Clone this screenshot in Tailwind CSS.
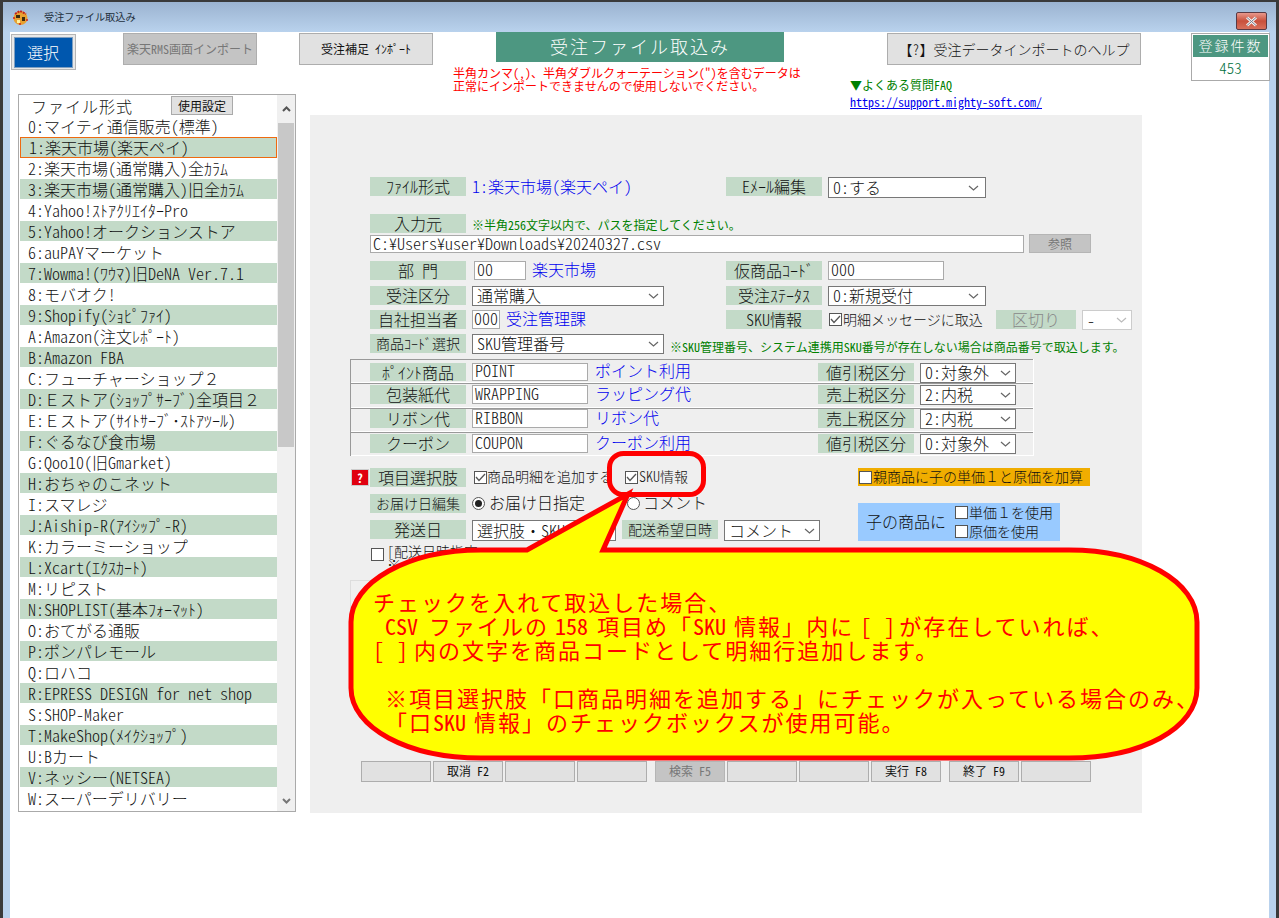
<!DOCTYPE html>
<html lang="ja">
<head>
<meta charset="utf-8">
<title>受注ファイル取込み</title>
<script src="https://cdn.jsdelivr.net/npm/@tailwindcss/browser@4"></script>
</head>
<body class="m-0 bg-white">
<div class="relative w-[1279px] h-[918px] overflow-hidden flex flex-col bg-[#b9d2ed] border-t-2 border-x-[3px] border-[#3a3a3a] font-['Noto_Sans_CJK_JP',sans-serif] font-light [font-feature-settings:'hwid'] text-[#111] text-[16px]">
  <!-- title bar -->
  <div class="h-[30px] shrink-0 flex items-center bg-gradient-to-b from-[#9bb3d0] to-[#b9d2ed] pl-[9px]">
    <svg width="17" height="17" viewBox="0 0 17 17"><circle cx="8.5" cy="9" r="7" fill="#e8a030"/><path d="M3 5 8 2l6 3" fill="none" stroke="#c02020" stroke-width="2" stroke-dasharray="2 1"/><rect x="4" y="6" width="4" height="3" fill="#3a2a10"/><rect x="10" y="8" width="3" height="4" fill="#3a2a10"/><rect x="5" y="11" width="3" height="3" fill="#fff0a0"/><circle cx="2" cy="9" r="1" fill="#d02020"/><circle cx="15" cy="11" r="1" fill="#d02020"/><circle cx="8" cy="15" r="1" fill="#d02020"/></svg>
    <span class="ml-[15px] text-[10.2px] font-normal leading-none text-[#22303c]">受注ファイル取込み</span>
    <div class="ml-auto mr-[9px] mt-[8px] w-[31px] h-[18px] rounded-[2px] border border-[#5a3a44] bg-gradient-to-b from-[#e8988c] via-[#c8503c] to-[#d8705c] flex items-center justify-center">
      <svg width="13" height="11" viewBox="0 0 13 11"><path d="M2 1.5 11 9.5M11 1.5 2 9.5" stroke="#f4f4f4" stroke-width="3"/><path d="M2 1.5 11 9.5M11 1.5 2 9.5" stroke="#7a7a8a" stroke-width="1" /></svg>
    </div>
  </div>
  <!-- client area -->
  <div class="flex-1 mx-[7px] bg-white flex flex-col">
    <!-- top row -->
    <div class="h-[62px] shrink-0 flex items-start">
      <div class="ml-px mt-[2px] w-[65px] h-[36px] shrink-0 bg-[#e8e8e8] border border-[#b5b5b5] flex items-center justify-center">
        <div class="w-[59px] h-[31px] bg-[#0057ae] border border-[#7f9fc0] text-white flex items-center justify-center pb-px pr-px">選択</div>
      </div>
      <div class="ml-[47px] mt-px w-[134px] h-[32px] shrink-0 bg-[#c4c4c4] border border-[#aeaeae] text-[#777] text-[12px] font-normal flex items-center justify-center">楽天RMS画面インポート</div>
      <div class="ml-[42px] mt-px w-[134px] h-[32px] shrink-0 bg-[#e1e1e1] border border-[#adadad] text-[12px] font-normal flex items-center justify-center">受注補足 ｲﾝﾎﾟｰﾄ</div>
      <div class="ml-[20px] w-[350px] shrink-0 flex flex-col">
        <div class="ml-[43px] w-[288px] h-[30px] bg-[#4d9781] text-white text-[18px] tracking-[2px] flex items-center justify-center pb-[2px]">受注ファイル取込み</div>
        <p class="mt-[4px] text-[12px] font-normal leading-[13px] text-[#ff0000] whitespace-nowrap">半角カンマ(,)、半角ダブルクォーテーション(")を含むデータは<br>正常にインポートできませんので使用しないでください。</p>
      </div>
      <div class="ml-[47px] w-[291px] shrink-0 flex flex-col">
        <div class="ml-[37px] mt-px w-[254px] h-[32px] bg-[#e1e1e1] border border-[#adadad] text-[14px] flex items-center justify-center"><span class="[font-feature-settings:normal]">【</span>?<span class="[font-feature-settings:normal]">】</span>受注データインポートのヘルプ</div>
        <p class="mt-[13px] text-[12px] font-normal leading-[13px] text-[#008000]">▼よくある質問FAQ</p>
        <a class="mt-[4px] text-[12px] font-normal leading-[13px] text-[#0000ee] underline whitespace-nowrap">https://support.mighty-soft.com/</a>
      </div>
      <div class="ml-[50px] mt-px w-[79px] h-[48px] shrink-0 bg-white border border-[#aaa] flex flex-col">
        <div class="mx-px mt-px h-[24px] bg-[#4d9781] text-white text-[14px] tracking-[2px] flex items-center justify-center">登録件数</div>
        <div class="flex-1 text-[#00703c] text-[15px] flex items-center justify-center pb-px">453</div>
      </div>
    </div>
    <!-- main row -->
    <div class="flex items-start">
      <!-- file type list -->
      <div class="ml-[8px] w-[278px] h-[718px] shrink-0 border border-[#aaa] flex">
        <div class="w-[258px] pl-px flex flex-col">
          <div class="h-[21px] flex items-center">
            <span class="ml-[11px] tracking-[1px] leading-none w-[140px]">ファイル形式</span>
            <span class="w-[62px] h-[19px] bg-[#e1e1e1] border border-[#aaa] text-[12px] font-normal flex items-center justify-center">使用設定</span>
          </div>
          <div class="h-[21px] pl-[8px] leading-[20px] whitespace-nowrap">0:マイティ通信販売(標準)</div>
          <div class="h-[21px] pl-[8px] leading-[18px] whitespace-nowrap bg-[#c3dac8] border-[1.5px] border-[#ee6a10]">1:楽天市場(楽天ペイ)</div>
          <div class="h-[21px] pl-[8px] leading-[20px] whitespace-nowrap">2:楽天市場(通常購入)全ｶﾗﾑ</div>
          <div class="h-[21px] pl-[8px] leading-[20px] whitespace-nowrap bg-[#c3dac8] border-b border-white">3:楽天市場(通常購入)旧全ｶﾗﾑ</div>
          <div class="h-[21px] pl-[8px] leading-[20px] whitespace-nowrap">4:Yahoo!ｽﾄｱｸﾘｴｲﾀｰPro</div>
          <div class="h-[21px] pl-[8px] leading-[20px] whitespace-nowrap bg-[#c3dac8] border-b border-white">5:Yahoo!オークションストア</div>
          <div class="h-[21px] pl-[8px] leading-[20px] whitespace-nowrap">6:auPAYマーケット</div>
          <div class="h-[21px] pl-[8px] leading-[20px] whitespace-pre bg-[#c3dac8] border-b border-white">7:Wowma!(ﾜｳﾏ)旧DeNA Ver.7.1</div>
          <div class="h-[21px] pl-[8px] leading-[20px] whitespace-nowrap">8:モバオク!</div>
          <div class="h-[21px] pl-[8px] leading-[20px] whitespace-nowrap bg-[#c3dac8] border-b border-white">9:Shopify(ｼｮﾋﾟﾌｧｲ)</div>
          <div class="h-[21px] pl-[8px] leading-[20px] whitespace-nowrap">A:Amazon(注文ﾚﾎﾟｰﾄ)</div>
          <div class="h-[21px] pl-[8px] leading-[20px] whitespace-pre bg-[#c3dac8] border-b border-white">B:Amazon FBA</div>
          <div class="h-[21px] pl-[8px] leading-[20px] whitespace-nowrap">C:フューチャーショップ<span class="[font-feature-settings:normal]">２</span></div>
          <div class="h-[21px] pl-[8px] leading-[20px] whitespace-nowrap bg-[#c3dac8] border-b border-white">D:<span class="[font-feature-settings:normal]">Ｅ</span>ストア(ｼｮｯﾌﾟｻｰﾌﾞ)全項目<span class="[font-feature-settings:normal]">２</span></div>
          <div class="h-[21px] pl-[8px] leading-[20px] whitespace-nowrap">E:<span class="[font-feature-settings:normal]">Ｅ</span>ストア(ｻｲﾄｻｰﾌﾞ･ｽﾄｱﾂｰﾙ)</div>
          <div class="h-[21px] pl-[8px] leading-[20px] whitespace-nowrap bg-[#c3dac8] border-b border-white">F:ぐるなび食市場</div>
          <div class="h-[21px] pl-[8px] leading-[20px] whitespace-nowrap">G:Qoo10(旧Gmarket)</div>
          <div class="h-[21px] pl-[8px] leading-[20px] whitespace-nowrap bg-[#c3dac8] border-b border-white">H:おちゃのこネット</div>
          <div class="h-[21px] pl-[8px] leading-[20px] whitespace-nowrap">I:スマレジ</div>
          <div class="h-[21px] pl-[8px] leading-[20px] whitespace-nowrap bg-[#c3dac8] border-b border-white">J:Aiship-R(ｱｲｼｯﾌﾟ-R)</div>
          <div class="h-[21px] pl-[8px] leading-[20px] whitespace-nowrap">K:カラーミーショップ</div>
          <div class="h-[21px] pl-[8px] leading-[20px] whitespace-nowrap bg-[#c3dac8] border-b border-white">L:Xcart(ｴｸｽｶｰﾄ)</div>
          <div class="h-[21px] pl-[8px] leading-[20px] whitespace-nowrap">M:リピスト</div>
          <div class="h-[21px] pl-[8px] leading-[20px] whitespace-nowrap bg-[#c3dac8] border-b border-white">N:SHOPLIST(基本ﾌｫｰﾏｯﾄ)</div>
          <div class="h-[21px] pl-[8px] leading-[20px] whitespace-nowrap">O:おてがる通販</div>
          <div class="h-[21px] pl-[8px] leading-[20px] whitespace-nowrap bg-[#c3dac8] border-b border-white">P:ポンパレモール</div>
          <div class="h-[21px] pl-[8px] leading-[20px] whitespace-nowrap">Q:ロハコ</div>
          <div class="h-[21px] pl-[8px] leading-[20px] whitespace-pre bg-[#c3dac8] border-b border-white">R:EPRESS DESIGN for net shop</div>
          <div class="h-[21px] pl-[8px] leading-[20px] whitespace-nowrap">S:SHOP-Maker</div>
          <div class="h-[21px] pl-[8px] leading-[20px] whitespace-nowrap bg-[#c3dac8] border-b border-white">T:MakeShop(ﾒｲｸｼｮｯﾌﾟ)</div>
          <div class="h-[21px] pl-[8px] leading-[20px] whitespace-nowrap">U:Bカート</div>
          <div class="h-[21px] pl-[8px] leading-[20px] whitespace-nowrap bg-[#c3dac8] border-b border-white">V:ネッシー(NETSEA)</div>
          <div class="h-[21px] pl-[8px] leading-[20px] whitespace-nowrap">W:スーパーデリバリー</div>
        </div>
        <div class="w-[18px] bg-[#f0f0f0] flex flex-col items-center">
          <div class="h-[28px] flex items-center">
            <svg width="9" height="6" viewBox="0 0 9 6"><path d="M1 5 4.5 1.5 8 5" fill="none" stroke="#555" stroke-width="2"/></svg>
          </div>
          <div class="w-[16px] h-[324px] bg-[#c8c8c8]"></div>
          <div class="mt-auto h-[21px] flex items-center">
            <svg width="9" height="6" viewBox="0 0 9 6"><path d="M1 1 4.5 4.5 8 1" fill="none" stroke="#777" stroke-width="2"/></svg>
          </div>
        </div>
      </div>
      <!-- main panel -->
      <div class="ml-[14px] mt-[21px] w-[832px] h-[698px] shrink-0 bg-[#efefef] flex flex-col">
        <div class="mt-[62px] ml-[60px] h-[37px] flex items-start">
          <div class="w-[96px] h-[19px] bg-[#c3dac8] flex items-center justify-center pb-px">ﾌｧｲﾙ形式</div>
          <div class="ml-[6px] w-[254px] h-[19px] leading-[18px] text-[#0000ee]">1:楽天市場(楽天ペイ)</div>
          <div class="w-[96px] h-[19px] bg-[#c3dac8] flex items-center justify-center pb-px">Eﾒｰﾙ編集</div>
          <div class="ml-[6px] w-[158px] h-[21px] bg-white border border-[#777] flex items-center justify-between pl-[4px] pr-[6px] leading-[16px] pb-[2px]">0:する<svg class="mt-[2px]" width="11" height="6" viewBox="0 0 11 6"><path d="M1 1 5.5 5 10 1" fill="none" stroke="#666" stroke-width="1.2"/></svg></div>
        </div>
        <div class="ml-[60px] h-[20px] flex items-start">
          <div class="w-[96px] h-[19px] bg-[#c3dac8] flex items-center justify-center pb-px">入力元</div>
          <span class="ml-[6px] mt-[4px] text-[12px] font-normal leading-[14px] text-[#008000] whitespace-nowrap">※半角256文字以内で、パスを指定してください。</span>
        </div>
        <div class="ml-[60px] h-[27px] flex items-start">
          <div class="mt-px w-[654px] h-[18px] bg-white border border-[#aaa] pl-[2px] leading-[15px]">C:¥Users¥user¥Downloads¥20240327.csv</div>
          <div class="ml-[5px] w-[62px] h-[19px] bg-[#c4c4c4] border border-[#b5b5b5] text-[#777] text-[12px] font-normal flex items-center justify-center">参照</div>
        </div>
        <div class="ml-[60px] h-[25px] flex items-start">
          <div class="w-[96px] h-[19px] bg-[#c3dac8] flex items-center justify-center whitespace-pre pb-px">部　門</div>
          <div class="ml-[8px] w-[52px] h-[19px] bg-white border border-[#aaa] pl-[2px] leading-[15px]">00</div>
          <div class="ml-[6px] w-[194px] h-[19px] leading-[17px] text-[#0000ee]">楽天市場</div>
          <div class="w-[96px] h-[19px] bg-[#c3dac8] flex items-center justify-center pb-px">仮商品ｺｰﾄﾞ</div>
          <div class="ml-[6px] w-[116px] h-[19px] bg-white border border-[#aaa] pl-[2px] leading-[15px]">000</div>
        </div>
        <div class="ml-[60px] h-[24px] flex items-start">
          <div class="w-[96px] h-[19px] bg-[#c3dac8] flex items-center justify-center pb-px">受注区分</div>
          <div class="ml-[6px] w-[192px] h-[20px] bg-white border border-[#777] flex items-center justify-between pl-[4px] pr-[4px] leading-[16px] pb-[2px]">通常購入<svg class="mt-[2px]" width="11" height="6" viewBox="0 0 11 6"><path d="M1 1 5.5 5 10 1" fill="none" stroke="#666" stroke-width="1.2"/></svg></div>
          <div class="ml-[62px] w-[96px] h-[19px] bg-[#c3dac8] flex items-center justify-center pb-px">受注ｽﾃｰﾀｽ</div>
          <div class="ml-[6px] w-[158px] h-[20px] bg-white border border-[#777] flex items-center justify-between pl-[4px] pr-[6px] leading-[16px] pb-[2px]">0:新規受付<svg class="mt-[2px]" width="11" height="6" viewBox="0 0 11 6"><path d="M1 1 5.5 5 10 1" fill="none" stroke="#666" stroke-width="1.2"/></svg></div>
        </div>
        <div class="ml-[60px] h-[24px] flex items-start">
          <div class="w-[96px] h-[19px] bg-[#c3dac8] flex items-center justify-center pb-px">自社担当者</div>
          <div class="ml-[6px] w-[28px] h-[19px] bg-white border border-[#aaa] pl-px leading-[15px]">000</div>
          <div class="ml-[6px] w-[220px] h-[19px] leading-[17px] text-[#0000ee]">受注管理課</div>
          <div class="w-[96px] h-[19px] bg-[#c3dac8] flex items-center justify-center pb-px">SKU情報</div>
          <div class="ml-[7px] mt-[3px] w-[13px] h-[13px] bg-white border border-[#555] flex items-center justify-center shrink-0"><svg width="11" height="9" viewBox="0 0 11 9"><path d="M1 4 4 7.5 10 1" fill="none" stroke="#555" stroke-width="1.3"/></svg></div>
          <span class="ml-px w-[153px] h-[19px] leading-[18px] text-[14px] whitespace-nowrap">明細メッセージに取込</span>
          <div class="w-[80px] h-[19px] bg-[#c3dac8] text-[#888] flex items-center justify-center pb-px">区切り</div>
          <div class="ml-[6px] w-[50px] h-[20px] bg-white border border-[#ccc] flex items-center justify-between pl-[4px] pr-[4px]">-<svg width="11" height="6" viewBox="0 0 11 6"><path d="M1 1 5.5 5 10 1" fill="none" stroke="#bbb" stroke-width="1.2"/></svg></div>
        </div>
        <div class="ml-[60px] h-[25px] flex items-start">
          <div class="w-[96px] h-[19px] bg-[#c3dac8] text-[14px] flex items-center justify-center pb-px">商品ｺｰﾄﾞ選択</div>
          <div class="ml-[6px] w-[192px] h-[20px] bg-white border border-[#777] flex items-center justify-between pl-[4px] pr-[4px] leading-[16px] pb-[2px]">SKU管理番号<svg class="mt-[2px]" width="11" height="6" viewBox="0 0 11 6"><path d="M1 1 5.5 5 10 1" fill="none" stroke="#666" stroke-width="1.2"/></svg></div>
          <span class="ml-[6px] mt-[6px] text-[12px] font-normal leading-[14px] text-[#008000] whitespace-nowrap">※SKU管理番号、システム連携用SKU番号が存在しない場合は商品番号で取込します。</span>
        </div>
        <!-- fee table -->
        <div class="ml-[40px] w-[684px] h-[97px] border-l border-[#999] border-r border-r-white flex flex-col">
          <div class="h-[24px] border-t border-t-[#999] border-b border-b-white pl-[19px] pt-[3px] flex items-start">
            <div class="w-[96px] h-[18px] bg-[#c3dac8] flex items-center justify-center pb-px">ﾎﾟｲﾝﾄ商品</div>
            <div class="ml-[6px] w-[116px] h-[18px] bg-white border border-[#aaa] pl-[2px] leading-[13px]">POINT</div>
            <div class="ml-[7px] w-[223px] leading-[15px] text-[#0000ee]">ポイント利用</div>
            <div class="w-[96px] h-[18px] bg-[#c3dac8] flex items-center justify-center pb-px">値引税区分</div>
            <div class="ml-[6px] w-[96px] h-[20px] bg-white border border-[#777] flex items-center justify-between pl-[4px] pr-[4px] leading-[16px] pb-[2px]">0:対象外<svg class="mt-[2px]" width="11" height="6" viewBox="0 0 11 6"><path d="M1 1 5.5 5 10 1" fill="none" stroke="#666" stroke-width="1.2"/></svg></div>
          </div>
          <div class="h-[25px] border-t border-t-[#999] border-b border-b-white pl-[19px] pt-px flex items-start">
            <div class="w-[96px] h-[19px] bg-[#c3dac8] flex items-center justify-center pb-px">包装紙代</div>
            <div class="ml-[6px] w-[116px] h-[19px] bg-white border border-[#aaa] pl-[2px] leading-[15px]">WRAPPING</div>
            <div class="ml-[7px] w-[223px] leading-[17px] text-[#0000ee]">ラッピング代</div>
            <div class="w-[96px] h-[19px] bg-[#c3dac8] flex items-center justify-center pb-px">売上税区分</div>
            <div class="ml-[6px] w-[96px] h-[20px] bg-white border border-[#777] flex items-center justify-between pl-[4px] pr-[4px] leading-[16px] pb-[2px]">2:内税<svg class="mt-[2px]" width="11" height="6" viewBox="0 0 11 6"><path d="M1 1 5.5 5 10 1" fill="none" stroke="#666" stroke-width="1.2"/></svg></div>
          </div>
          <div class="h-[24px] border-t border-t-[#999] border-b border-b-white pl-[19px] flex items-start">
            <div class="w-[96px] h-[19px] bg-[#c3dac8] flex items-center justify-center pb-px">リボン代</div>
            <div class="ml-[6px] w-[116px] h-[19px] bg-white border border-[#aaa] pl-[2px] leading-[15px]">RIBBON</div>
            <div class="ml-[7px] w-[223px] leading-[17px] text-[#0000ee]">リボン代</div>
            <div class="w-[96px] h-[19px] bg-[#c3dac8] flex items-center justify-center pb-px">売上税区分</div>
            <div class="ml-[6px] w-[96px] h-[20px] bg-white border border-[#777] flex items-center justify-between pl-[4px] pr-[4px] leading-[16px] pb-[2px]">2:内税<svg class="mt-[2px]" width="11" height="6" viewBox="0 0 11 6"><path d="M1 1 5.5 5 10 1" fill="none" stroke="#666" stroke-width="1.2"/></svg></div>
          </div>
          <div class="h-[24px] border-t border-t-[#999] border-b border-b-white pl-[19px] pt-px flex items-start">
            <div class="w-[96px] h-[19px] bg-[#c3dac8] flex items-center justify-center pb-px">クーポン</div>
            <div class="ml-[6px] w-[116px] h-[19px] bg-white border border-[#aaa] pl-[2px] leading-[15px]">COUPON</div>
            <div class="ml-[7px] w-[223px] leading-[17px] text-[#0000ee]">クーポン利用</div>
            <div class="w-[96px] h-[19px] bg-[#c3dac8] flex items-center justify-center pb-px">値引税区分</div>
            <div class="ml-[6px] w-[96px] h-[20px] bg-white border border-[#777] flex items-center justify-between pl-[4px] pr-[4px] leading-[16px] pb-[2px]">0:対象外<svg class="mt-[2px]" width="11" height="6" viewBox="0 0 11 6"><path d="M1 1 5.5 5 10 1" fill="none" stroke="#666" stroke-width="1.2"/></svg></div>
          </div>
        </div>
        <!-- options -->
        <div class="ml-[41px] mt-[12px] h-[112px] flex items-start">
          <div class="w-[507px] shrink-0 flex flex-col">
            <div class="h-[26px] flex items-start">
              <div class="mt-px w-[18px] h-[17px] bg-[#e00010] border border-[#ccc] text-white text-[12px] font-bold flex items-center justify-center">?</div>
              <div class="ml-px w-[96px] h-[19px] bg-[#c3dac8] flex items-center justify-center pb-px">項目選択肢</div>
              <div class="ml-[8px] mt-[3px] w-[13px] h-[13px] bg-white border border-[#555] flex items-center justify-center shrink-0"><svg width="11" height="9" viewBox="0 0 11 9"><path d="M1 4 4 7.5 10 1" fill="none" stroke="#555" stroke-width="1.3"/></svg></div>
              <span class="w-[138px] h-[19px] leading-[17px] text-[14px] whitespace-nowrap">商品明細を追加する</span>
              <div class="mt-[3px] w-[13px] h-[13px] bg-white border border-[#555] flex items-center justify-center shrink-0"><svg width="11" height="9" viewBox="0 0 11 9"><path d="M1 4 4 7.5 10 1" fill="none" stroke="#555" stroke-width="1.3"/></svg></div>
              <span class="ml-px h-[19px] leading-[17px] text-[14px] whitespace-nowrap">SKU情報</span>
            </div>
            <div class="h-[26px] flex items-start">
              <div class="ml-[19px] w-[96px] h-[19px] bg-[#c3dac8] text-[14px] flex items-center justify-center pb-px">お届け日編集</div>
              <div class="ml-[6px] mt-[3px] w-[13px] h-[13px] rounded-full bg-white border border-[#555] flex items-center justify-center shrink-0"><div class="w-[7px] h-[7px] rounded-full bg-[#222]"></div></div>
              <span class="ml-[4px] w-[138px] h-[19px] leading-[17px] whitespace-nowrap">お届け日指定</span>
              <div class="mt-[3px] w-[13px] h-[13px] rounded-full bg-white border border-[#555] shrink-0"></div>
              <span class="ml-[3px] h-[19px] leading-[17px] whitespace-nowrap">コメント</span>
            </div>
            <div class="h-[28px] flex items-start">
              <div class="ml-[19px] w-[96px] h-[19px] bg-[#c3dac8] flex items-center justify-center pb-px">発送日</div>
              <div class="ml-[6px] w-[144px] h-[21px] bg-white border border-[#777] flex items-center pl-[4px] whitespace-nowrap leading-[16px] pb-[2px]">選択肢・SKU</div>
              <div class="ml-[6px] w-[96px] h-[19px] bg-[#c3dac8] text-[14px] flex items-center justify-center pb-px">配送希望日時</div>
              <div class="ml-[6px] w-[96px] h-[21px] bg-white border border-[#777] flex items-center justify-between pl-[4px] pr-[4px] leading-[16px] pb-[2px]">コメント<svg class="mt-[2px]" width="11" height="6" viewBox="0 0 11 6"><path d="M1 1 5.5 5 10 1" fill="none" stroke="#666" stroke-width="1.2"/></svg></div>
            </div>
            <div class="h-[28px] flex items-start">
              <div class="ml-[20px] w-[13px] h-[13px] bg-white border border-[#555] shrink-0"></div>
              <span class="ml-[3px] -mt-[3px] text-[14px] leading-[13px] whitespace-nowrap">[配送日時指定<br>※</span>
            </div>
          </div>
          <div class="flex flex-col">
            <div class="w-[232px] h-[18px] bg-[#f0ad00] flex items-center text-[14px] whitespace-nowrap pb-px">
              <div class="w-[13px] h-[13px] ml-px mt-px bg-white border border-[#555] shrink-0"></div><span class="ml-px">親商品に子の単価<span class="[font-feature-settings:normal]">１</span>と原価を加算</span>
            </div>
            <div class="mt-[17px] w-[202px] h-[38px] bg-[#99caff] flex items-center pb-px">
              <span class="ml-[8px] w-[89px] leading-none pb-px">子の商品に</span>
              <div class="flex flex-col gap-[5px] text-[14px] leading-none whitespace-nowrap">
                <div class="flex items-center"><div class="w-[13px] h-[13px] bg-white border border-[#555]"></div><span class="ml-px">単価<span class="[font-feature-settings:normal]">１</span>を使用</span></div>
                <div class="flex items-center"><div class="w-[13px] h-[13px] bg-white border border-[#555]"></div><span class="ml-px">原価を使用</span></div>
              </div>
            </div>
          </div>
        </div>
        <!-- box hidden beneath the callout -->
        <div class="ml-[40px] w-[750px] h-[90px] border border-[#ddd]"></div>
        <!-- function keys -->
        <div class="ml-[51px] mt-[91px] flex text-[12px] font-normal leading-none">
          <div class="w-[70px] h-[21px] bg-[#e1e1e1] border border-[#adadad]"></div>
          <div class="ml-[2px] w-[70px] h-[21px] bg-[#e1e1e1] border border-[#adadad] flex items-center justify-center pb-px">取消 F2</div>
          <div class="ml-[2px] w-[70px] h-[21px] bg-[#e1e1e1] border border-[#adadad]"></div>
          <div class="ml-[2px] w-[70px] h-[21px] bg-[#e1e1e1] border border-[#adadad]"></div>
          <div class="ml-[8px] w-[70px] h-[21px] bg-[#c4c4c4] border border-[#b5b5b5] text-[#777] flex items-center justify-center pb-px">検索 F5</div>
          <div class="ml-[2px] w-[70px] h-[21px] bg-[#e1e1e1] border border-[#adadad]"></div>
          <div class="ml-[2px] w-[70px] h-[21px] bg-[#e1e1e1] border border-[#adadad]"></div>
          <div class="ml-[2px] w-[70px] h-[21px] bg-[#e1e1e1] border border-[#adadad] flex items-center justify-center pb-px">実行 F8</div>
          <div class="ml-[8px] w-[70px] h-[21px] bg-[#e1e1e1] border border-[#adadad] flex items-center justify-center pb-px">終了 F9</div>
          <div class="ml-[2px] w-[70px] h-[21px] bg-[#e1e1e1] border border-[#adadad]"></div>
        </div>
      </div>
    </div>
  </div>
  <!-- annotation callout, over the form -->
  <svg class="absolute left-[-3px] top-[-2px] pointer-events-none" width="1279" height="918" viewBox="0 0 1279 918">
    <rect x="609.5" y="453.5" width="94" height="41" rx="14" ry="14" fill="none" stroke="#ff0000" stroke-width="5"/>
    <path d="M481 550 H527 L628 494 L603 550 H1069 C1142 550 1197 582 1197 622 V688 C1197 728 1142 758 1069 758 H481 C408 758 351 728 351 688 V622 C351 582 408 550 481 550 Z" fill="#ffff00" stroke="#ff0000" stroke-width="5" stroke-linejoin="miter"/>
  </svg>
  <div class="absolute left-[370px] top-[587px] text-[22px] font-normal leading-[24px] tracking-[2px] text-[#ff0000] whitespace-nowrap">
    <div>チェックを入れて取込した場合、</div>
    <div class="pl-[12px]"><span class="tracking-normal">CSV&nbsp;</span>ファイルの<span class="ml-[6px] mr-[9px] tracking-normal">158</span>項目め<span class="[font-feature-settings:normal]">「</span><span class="tracking-normal">SKU</span><span class="ml-[8px]">情報</span><span class="[font-feature-settings:normal]">」</span>内に<span class="ml-[6px] mr-[3px] tracking-[1px]">[ ]</span>が存在していれば、</div>
    <div><span class="tracking-[1px]">[ ]</span><span class="ml-[5px]">内の文字を商品コードとして明細行追加します。</span></div>
    <div class="h-[24px]"></div>
    <div class="pl-[12px]">※項目選択肢<span class="[font-feature-settings:normal]">「</span>口商品明細を追加する<span class="[font-feature-settings:normal]">」</span>にチェックが入っている場合のみ、</div>
    <div class="pl-[12px]"><span class="[font-feature-settings:normal]">「</span>口<span class="tracking-normal">SKU</span><span class="ml-[8px]">情報</span><span class="[font-feature-settings:normal]">」</span>のチェックボックスが使用可能。</div>
  </div>
</div>
</body>
</html>
